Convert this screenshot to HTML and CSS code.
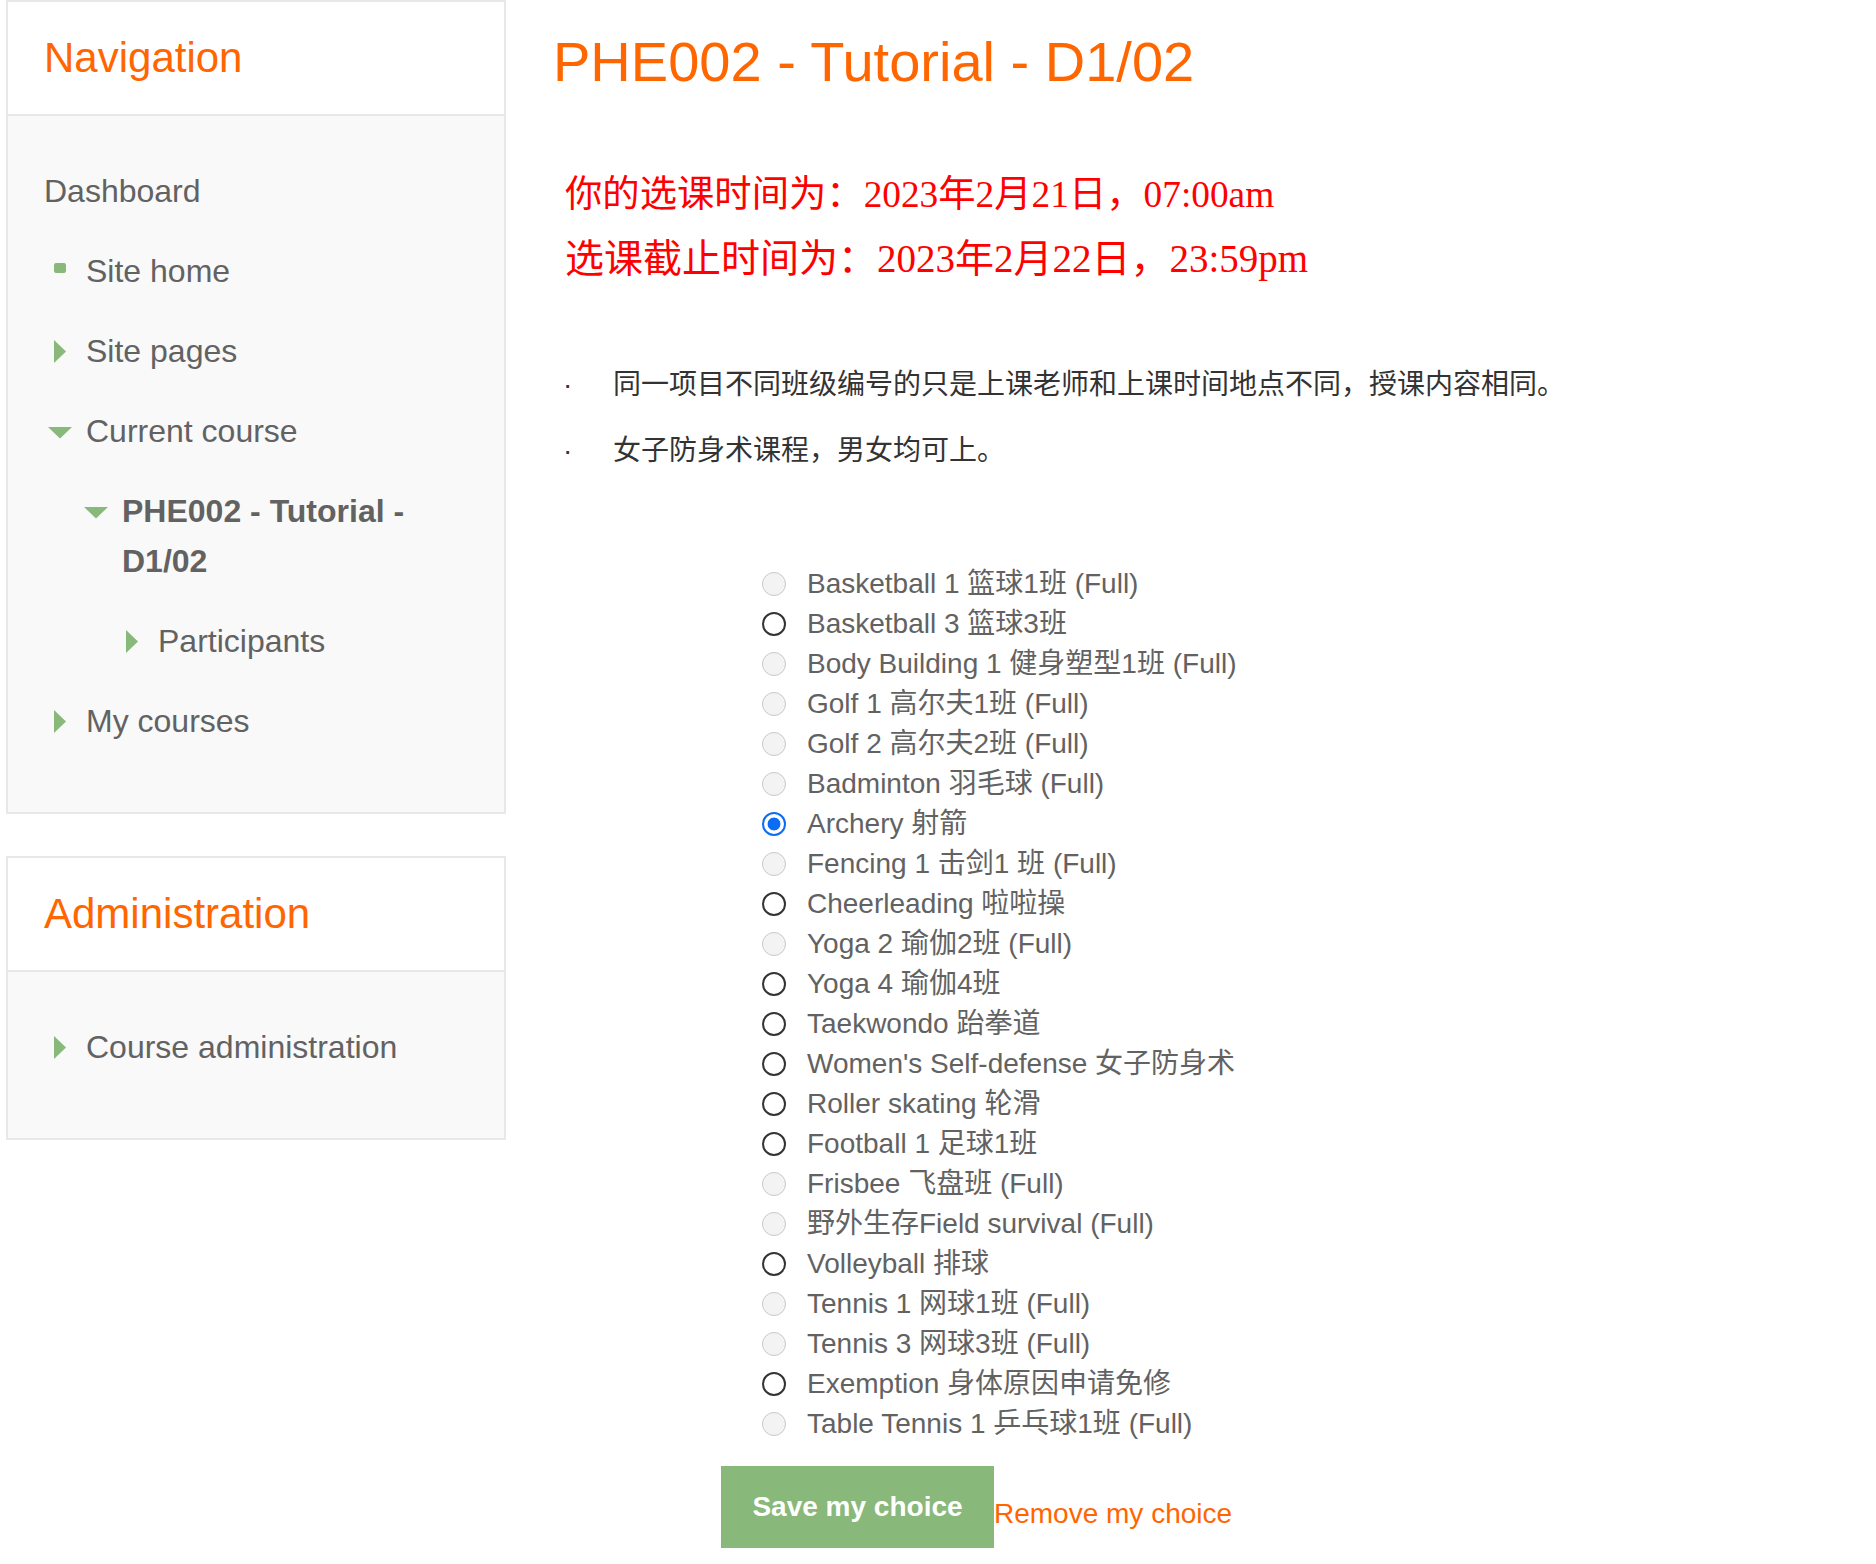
FILE: index.html
```html
<!DOCTYPE html>
<html lang="zh">
<head>
<meta charset="utf-8">
<title>PHE002 - Tutorial - D1/02</title>
<link rel="stylesheet" href="styles.css">
</head>
<body>
<div class="page">
  <aside class="sidebar">
    <section class="block">
      <div class="block-header"><h2>Navigation</h2></div>
      <div class="block-body">
        <ul class="tree">
          <li class="item"><span class="label">Dashboard</span></li>
          <li>
            <ul class="tree sub">
              <li class="item"><span class="icon"><svg viewBox="0 0 24 50" width="24" height="50"><rect x="6" y="17" width="12" height="10" rx="2" fill="#89b87b"/></svg></span><span class="label">Site home</span></li>
              <li class="item"><span class="icon"><svg viewBox="0 0 24 50" width="24" height="50"><path d="M6 14 L18 25.5 L6 37 Z" fill="#89b87b"/></svg></span><span class="label">Site pages</span></li>
              <li class="item"><span class="icon"><svg viewBox="0 0 24 50" width="24" height="50"><path d="M0 21 L24 21 L12 32.5 Z" fill="#89b87b"/></svg></span><span class="label">Current course</span></li>
              <li>
                <ul class="tree sub2">
                  <li class="item"><span class="icon"><svg viewBox="0 0 24 50" width="24" height="50"><path d="M0 21 L24 21 L12 32.5 Z" fill="#89b87b"/></svg></span><span class="label bold">PHE002 - Tutorial - D1/02</span></li>
                  <li>
                    <ul class="tree sub2">
                      <li class="item"><span class="icon"><svg viewBox="0 0 24 50" width="24" height="50"><path d="M6 14 L18 25.5 L6 37 Z" fill="#89b87b"/></svg></span><span class="label">Participants</span></li>
                    </ul>
                  </li>
                </ul>
              </li>
              <li class="item"><span class="icon"><svg viewBox="0 0 24 50" width="24" height="50"><path d="M6 14 L18 25.5 L6 37 Z" fill="#89b87b"/></svg></span><span class="label">My courses</span></li>
            </ul>
          </li>
        </ul>
      </div>
    </section>
    <section class="block">
      <div class="block-header"><h2>Administration</h2></div>
      <div class="block-body">
        <ul class="tree sub">
          <li class="item"><span class="icon"><svg viewBox="0 0 24 50" width="24" height="50"><path d="M6 14 L18 25.5 L6 37 Z" fill="#89b87b"/></svg></span><span class="label">Course administration</span></li>
        </ul>
      </div>
    </section>
  </aside>

  <main class="main">
    <h1 class="title">PHE002 - Tutorial - D1/02</h1>
    <div class="dates">
      <p class="date1">你的选课时间为：2023年2月21日，07:00am</p>
      <p class="date2">选课截止时间为：2023年2月22日，23:59pm</p>
    </div>
    <ul class="notes">
      <li><span class="dot">·</span><span>同一项目不同班级编号的只是上课老师和上课时间地点不同，授课内容相同。</span></li>
      <li><span class="dot">·</span><span>女子防身术课程，男女均可上。</span></li>
    </ul>
    <form class="choice-form">
      <ul class="options">
        <li><input type="radio" name="c" disabled><label>Basketball 1 篮球1班 (Full)</label></li>
        <li><input type="radio" name="c"><label>Basketball 3 篮球3班</label></li>
        <li><input type="radio" name="c" disabled><label>Body Building 1 健身塑型1班 (Full)</label></li>
        <li><input type="radio" name="c" disabled><label>Golf 1 高尔夫1班 (Full)</label></li>
        <li><input type="radio" name="c" disabled><label>Golf 2 高尔夫2班 (Full)</label></li>
        <li><input type="radio" name="c" disabled><label>Badminton 羽毛球 (Full)</label></li>
        <li><input type="radio" name="c" checked><label>Archery 射箭</label></li>
        <li><input type="radio" name="c" disabled><label>Fencing 1 击剑1 班 (Full)</label></li>
        <li><input type="radio" name="c"><label>Cheerleading 啦啦操</label></li>
        <li><input type="radio" name="c" disabled><label>Yoga 2 瑜伽2班 (Full)</label></li>
        <li><input type="radio" name="c"><label>Yoga 4 瑜伽4班</label></li>
        <li><input type="radio" name="c"><label>Taekwondo 跆拳道</label></li>
        <li><input type="radio" name="c"><label>Women's Self-defense 女子防身术</label></li>
        <li><input type="radio" name="c"><label>Roller skating 轮滑</label></li>
        <li><input type="radio" name="c"><label>Football 1 足球1班</label></li>
        <li><input type="radio" name="c" disabled><label>Frisbee 飞盘班 (Full)</label></li>
        <li><input type="radio" name="c" disabled><label>野外生存Field survival (Full)</label></li>
        <li><input type="radio" name="c"><label>Volleyball 排球</label></li>
        <li><input type="radio" name="c" disabled><label>Tennis 1 网球1班 (Full)</label></li>
        <li><input type="radio" name="c" disabled><label>Tennis 3 网球3班 (Full)</label></li>
        <li><input type="radio" name="c"><label>Exemption 身体原因申请免修</label></li>
        <li><input type="radio" name="c" disabled><label>Table Tennis 1 乒乓球1班 (Full)</label></li>
      </ul>
      <div class="actions">
        <button type="button" class="save">Save my choice</button><a class="remove" href="#">Remove my choice</a>
      </div>
    </form>
  </main>
</div>
</body>
</html>
```

FILE: styles.css
```css
* { box-sizing: border-box; }
html, body { margin: 0; padding: 0; background: #fff; }
body {
  font-family: "Liberation Sans", Arial, "Noto Sans CJK SC", sans-serif;
  color: #626262;
}
.page {
  display: flex;
  align-items: flex-start;
}
.sidebar {
  width: 500px;
  margin-left: 6px;
  flex: none;
  display: flex;
  flex-direction: column;
  gap: 42px;
}
.block {
  border: 2px solid #e8e8e8;
  background: #f9f9f9;
}
.block-header {
  background: #fff;
  border-bottom: 2px solid #e8e8e8;
  padding: 32px 36px;
}
.block-header h2 {
  margin: 0;
  font-size: 42px;
  line-height: 48px;
  font-weight: normal;
  color: #ff6600;
}
.block-body {
  padding: 50px 20px 36px 36px;
}
.tree {
  list-style: none;
  margin: 0;
  padding: 0;
}
.tree.sub { padding-left: 4px; }
.tree.sub2 { padding-left: 36px; }
.item {
  display: flex;
  align-items: flex-start;
  font-size: 32px;
  line-height: 50px;
  margin-bottom: 30px;
}
.icon {
  flex: none;
  width: 24px;
  height: 50px;
  margin-right: 14px;
}
.icon svg { display: block; }
.label.bold { font-weight: bold; }

.main {
  margin-left: 47px;
  flex: 1;
}
.title {
  margin: 31px 0 0;
  font-size: 56px;
  line-height: 62px;
  font-weight: normal;
  color: #ff6600;
}
.dates {
  margin-top: 76px;
  padding-left: 12px;
  color: #ff0000;
  font-family: "Liberation Serif", "Times New Roman", "Noto Sans CJK SC", serif;
}
.dates p { margin: 0; }
.date1 { font-size: 37.33px; line-height: 52px; }
.date2 { font-size: 39px; line-height: 52px; margin-top: 12px !important; }

.notes {
  list-style: none;
  margin: 80px 0 0;
  padding: 0 0 0 10px;
  color: #333;
  font-size: 28px;
  line-height: 40px;
}
.notes li {
  display: flex;
  margin-bottom: 26px;
}
.notes .dot {
  width: 50px;
  flex: none;
}

.choice-form { margin-top: 93px; }
.options {
  list-style: none;
  margin: 0;
  padding: 0 0 0 209px;
}
.options li {
  display: flex;
  align-items: center;
  height: 40px;
  font-size: 28px;
  line-height: 40px;
}
.options input {
  -webkit-appearance: none;
  appearance: none;
  width: 24px;
  height: 24px;
  margin: 0 21px 0 0;
  border-radius: 50%;
  border: 2px solid #333;
  background: #fff;
  flex: none;
}
.options input:disabled {
  border: 1.5px solid #c9c9c9;
  background: #f3f3f3;
}
.options input:checked {
  border: 2.5px solid #0b6cf6;
  background: radial-gradient(circle, #0b6cf6 0 6px, #fff 6.8px);
}
.options label { color: #626262; white-space: nowrap; }

.actions {
  display: flex;
  align-items: flex-start;
  margin-top: 22px;
  padding-left: 168px;
}
.save {
  font-family: "Liberation Sans", Arial, sans-serif;
  font-size: 28px;
  font-weight: bold;
  line-height: 32px;
  color: #fff;
  background: #89b87b;
  border: 0;
  border-radius: 0;
  padding: 25px 31px;
  width: 273px;
  height: 82px;
}
.remove {
  font-size: 28px;
  line-height: 32px;
  color: #ff6600;
  text-decoration: none;
  margin-top: 32px;
}
```
